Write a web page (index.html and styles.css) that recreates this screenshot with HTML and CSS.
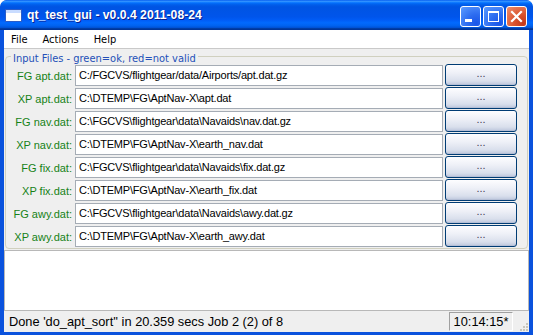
FILE: index.html
```html
<!DOCTYPE html>
<html>
<head>
<meta charset="utf-8">
<link rel="stylesheet" href="styles.css">
</head>
<body>
<div class="window">
  <div class="titlebar">
    <div class="app-icon"></div>
    <div class="title">qt_test_gui - v0.0.4 2011-08-24</div>
    <div class="tb-buttons">
      <div class="tb-btn">
        <svg width="21" height="21" viewBox="0 0 21 21"><rect x="5" y="13" width="7" height="3" fill="#fff"/></svg>
      </div>
      <div class="tb-btn">
        <svg width="21" height="21" viewBox="0 0 21 21"><rect x="5.5" y="5.5" width="10" height="10" fill="none" stroke="#fff" stroke-width="1"/><rect x="5" y="5" width="11" height="2" fill="#fff"/></svg>
      </div>
      <div class="tb-btn close">
        <svg width="21" height="21" viewBox="0 0 21 21"><path d="M6 6 L15 15 M15 6 L6 15" stroke="#fff" stroke-width="2.2" stroke-linecap="square"/></svg>
      </div>
    </div>
  </div>
  <div class="frame">
    <div class="menubar">
      <span class="menu">File</span>
      <span class="menu">Actions</span>
      <span class="menu">Help</span>
    </div>
    <div class="main">
      <div class="groupbox">
        <div class="gb-title">Input Files - green=ok, red=not valid</div>
        <div class="rows">
          <div class="label">FG apt.dat:</div><div class="field">C:/FGCVS/flightgear/data/Airports/apt.dat.gz</div><div class="btn">...</div>
          <div class="label">XP apt.dat:</div><div class="field">C:\DTEMP\FG\AptNav-X\apt.dat</div><div class="btn">...</div>
          <div class="label">FG nav.dat:</div><div class="field">C:\FGCVS\flightgear\data\Navaids\nav.dat.gz</div><div class="btn">...</div>
          <div class="label">XP nav.dat:</div><div class="field">C:\DTEMP\FG\AptNav-X\earth_nav.dat</div><div class="btn">...</div>
          <div class="label">FG fix.dat:</div><div class="field">C:\FGCVS\flightgear\data\Navaids\fix.dat.gz</div><div class="btn">...</div>
          <div class="label">XP fix.dat:</div><div class="field">C:\DTEMP\FG\AptNav-X\earth_fix.dat</div><div class="btn">...</div>
          <div class="label">FG awy.dat:</div><div class="field">C:\FGCVS\flightgear\data\Navaids\awy.dat.gz</div><div class="btn">...</div>
          <div class="label">XP awy.dat:</div><div class="field">C:\DTEMP\FG\AptNav-X\earth_awy.dat</div><div class="btn">...</div>
        </div>
      </div>
      <div class="log"></div>
    </div>
    <div class="statusbar">
      <div class="status-msg">Done 'do_apt_sort'' in 20.359 secs Job 2 (2) of 8</div>
      <div class="clock">10:14:15*</div>
      <div class="grip">
        <svg width="11" height="11" viewBox="0 0 11 11">
          <g fill="#c8c6bc">
            <rect x="8" y="2" width="2" height="2"/>
            <rect x="5" y="5" width="2" height="2"/><rect x="8" y="5" width="2" height="2"/>
            <rect x="2" y="8" width="2" height="2"/><rect x="5" y="8" width="2" height="2"/><rect x="8" y="8" width="2" height="2"/>
          </g>
        </svg>
      </div>
    </div>
  </div>
</div>
</body>
</html>
```
FILE: styles.css
```css
* { box-sizing: border-box; }
html, body { margin: 0; padding: 0; background: #fff; }
body { font-family: "Liberation Sans", Arial, sans-serif; font-size: 11px; color: #000; }

.window {
  width: 533px;
  height: 335px;
  display: flex;
  flex-direction: column;
  background: #0a52dd;
  border-radius: 7px 7px 0 0;
  overflow: hidden;
}

.titlebar {
  height: 30px;
  flex: 0 0 30px;
  display: flex;
  align-items: center;
  padding: 0 6px 0 6px;
  background: linear-gradient(to bottom, #0058ee 0%, #3593ff 4%, #288eff 6%, #127dff 8%, #036ffc 10%, #0262ee 14%, #0057e5 20%, #0054e3 24%, #0055eb 56%, #005bf5 66%, #026afe 76%, #0062ef 86%, #0052d6 92%, #0040ab 94%, #003092 100%);
  border-radius: 7px 7px 0 0;
}
.app-icon {
  width: 15px;
  height: 11px;
  background: #fff;
  border-top: 3px solid #c9dcff;
  box-shadow: 0 0 0 1px #2a5cc7;
  margin-right: 6px;
  margin-top: 1px;
}
.title {
  flex: 1;
  color: #fff;
  font-weight: bold;
  font-size: 12.2px;
  text-shadow: 1px 1px 0 #0a1f8f;
  white-space: nowrap;
}
.tb-buttons { display: flex; gap: 2px; margin-top: 3px; }
.tb-btn {
  width: 21px;
  height: 21px;
  border: 1px solid #fff;
  border-radius: 3px;
  background: radial-gradient(circle at 80% 85%, #1a56e8 0%, #2d6cf0 40%, #5c9cff 100%);
  display: flex;
  align-items: center;
  justify-content: center;
}
.tb-btn svg { display: block; margin: -1px; }
.tb-btn.close {
  background: radial-gradient(circle at 85% 85%, #c3381a 0%, #d9532e 40%, #ee8e6c 100%);
}

.frame {
  flex: 1;
  display: flex;
  flex-direction: column;
  margin: 0 4px 3px 4px;
  background: #efefef;
  min-height: 0;
}

.menubar {
  height: 19px;
  flex: 0 0 19px;
  background: #fff;
  border-bottom: 1px solid #c9c9c9;
  display: flex;
  align-items: center;
  padding-left: 1px;
  font-family: "DejaVu Sans Condensed", "DejaVu Sans", sans-serif;
  font-stretch: condensed;
}
.menu { padding: 0 6px; }
.menu + .menu { margin-left: 3px; }

.main {
  flex: 1;
  display: flex;
  flex-direction: column;
  min-height: 0;
}
.groupbox {
  position: relative;
  margin: 7px 1px 0 1px;
  border: 1px solid #d0d0bf;
  border-radius: 4px;
  padding: 8px 10px 1px 3px;
}
.gb-title {
  position: absolute;
  top: -5px;
  left: 5px;
  padding: 0 2px;
  color: #2450b8;
  background: #efefef;
  line-height: 13px;
  font-size: 11px;
  font-family: "DejaVu Sans Condensed", "DejaVu Sans", sans-serif;
  font-stretch: condensed;
}
.rows {
  display: grid;
  grid-template-columns: 63px 1fr 72px;
  grid-auto-rows: 21px;
  column-gap: 3px;
  row-gap: 2px;
}
.label {
  color: #168216;
  text-align: right;
  align-self: center;
  white-space: nowrap;
}
.field {
  background: #fff;
  border: 1px solid #a5acb5;
  padding: 0 3px;
  line-height: 19px;
  white-space: nowrap;
  overflow: hidden;
  margin-right: -1px;
  letter-spacing: -0.2px;
}
.btn {
  border: 1px solid #003c74;
  border-radius: 3px;
  background: linear-gradient(to bottom, #fdfdff 0%, #eef0f7 40%, #d9dfec 80%, #bcc6dc 100%);
  box-shadow: inset 0 -1px 0 #b5bfd6;
  text-align: center;
  line-height: 17px;
  color: #445;
  height: 22px;
  margin-top: -1px;
}

.log {
  flex: 1;
  margin-top: 1px;
  background: #fff;
  border: 1px solid #b8b8b8;
}

.statusbar {
  height: 21px;
  flex: 0 0 21px;
  display: flex;
  align-items: center;
  background: #efefef;
  padding-left: 5px;
  font-size: 12.8px;
}
.status-msg { flex: 1; white-space: nowrap; }
.clock {
  height: 19px;
  width: 64px;
  border: 1px solid #a0a0a0;
  border-color: #a0a0a0 #fff #fff #a0a0a0;
  line-height: 17px;
  text-align: center;
}
.grip { width: 16px; height: 21px; display: flex; align-items: flex-end; justify-content: flex-end; }
.grip svg { display: block; }
```
